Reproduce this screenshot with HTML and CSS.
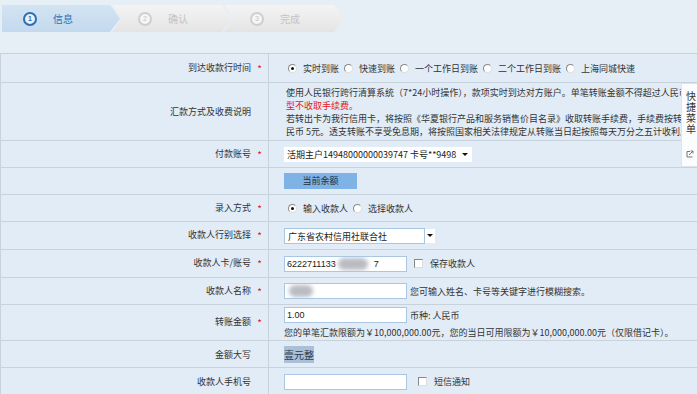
FILE: index.html
```html
<!DOCTYPE html>
<html lang="zh-CN">
<head>
  <meta charset="UTF-8">
  <title>转账汇款 - 信息</title>
  <link rel="stylesheet" href="styles.css">
</head>
<body>
  <div class="steps">
    <div class="step step-first active"><span class="num">1</span><span class="step-text">信息</span></div>
    <div class="step"><span class="num">2</span><span class="step-text">确认</span></div>
    <div class="step"><span class="num">3</span><span class="step-text">完成</span></div>
  </div>

  <table class="form">
    <tr class="h29">
      <td class="label">到达收款行时间<span class="star">*</span></td>
      <td class="value">
        <div class="options">
          <label><span class="radio on"></span>实时到账</label>
          <label><span class="radio"></span>快速到账</label>
          <label><span class="radio"></span>一个工作日到账</label>
          <label><span class="radio"></span>二个工作日到账</label>
          <label><span class="radio"></span>上海同城快速</label>
        </div>
      </td>
    </tr>
    <tr class="h58">
      <td class="label">汇款方式及收费说明<span class="star"></span></td>
      <td class="value note">
        使用人民银行跨行清算系统（7*24小时操作），款项实时到达对方账户。单笔转账金额不得超过人民币50000元，本行个人网银客户跨行转账本类<br>
        <span class="red">型不收取手续费。</span><br>
        若转出卡为我行信用卡，将按照《华夏银行产品和服务销售价目名录》收取转账手续费，手续费按转账金额的千分之五收取，最低人<br>
        民币 5元。透支转账不享受免息期，将按照国家相关法律规定从转账当日起按照每天万分之五计收利息。
      </td>
    </tr>
    <tr class="h27">
      <td class="label">付款账号<span class="star">*</span></td>
      <td class="value">
        <div class="select account">活期主户14948000000039747 卡号**9498<span class="caret"></span></div>
      </td>
    </tr>
    <tr class="h27">
      <td class="label"><span class="star"></span></td>
      <td class="value"><div class="btn">当前余额</div></td>
    </tr>
    <tr class="h27">
      <td class="label">录入方式<span class="star">*</span></td>
      <td class="value">
        <div class="options">
          <label><span class="radio on"></span>输入收款人</label>
          <label><span class="radio"></span>选择收款人</label>
        </div>
      </td>
    </tr>
    <tr class="h28">
      <td class="label">收款人行别选择<span class="star">*</span></td>
      <td class="value">
        <div class="bank">
          <div class="select bank-name">广东省农村信用社联合社</div>
          <div class="drop"><span class="caret"></span></div>
        </div>
      </td>
    </tr>
    <tr class="h28">
      <td class="label">收款人卡/账号<span class="star">*</span></td>
      <td class="value">
        <div class="line">
          <div class="input">6222711133<span class="blob wide"></span>7</div>
          <label class="check"><span class="box"></span>保存收款人</label>
        </div>
      </td>
    </tr>
    <tr class="h27">
      <td class="label">收款人名称<span class="star">*</span></td>
      <td class="value">
        <div class="line">
          <div class="input"><span class="blob"></span></div>
          <span class="hint">您可输入姓名、卡号等关键字进行模糊搜索。</span>
        </div>
      </td>
    </tr>
    <tr class="h36">
      <td class="label">转账金额<span class="star">*</span></td>
      <td class="value">
        <div class="line">
          <div class="input">1.00</div>
          <span class="hint">币种: 人民币</span>
        </div>
        <div class="limit">您的单笔汇款限额为￥10,000,000.00元，您的当日可用限额为￥10,000,000.00元（仅限借记卡）。</div>
      </td>
    </tr>
    <tr class="h27">
      <td class="label">金额大写<span class="star"></span></td>
      <td class="value"><span class="upper">壹元整</span></td>
    </tr>
    <tr class="h28">
      <td class="label">收款人手机号<span class="star"></span></td>
      <td class="value">
        <div class="line">
          <div class="input"></div>
          <label class="check sms"><span class="box"></span>短信通知</label>
        </div>
      </td>
    </tr>
  </table>

  <div class="quick">
    <span>快</span><span>捷</span><span>菜</span><span>单</span>
    <svg class="quick-icon" width="8" height="8" viewBox="0 0 8 8"><path d="M1 1.5V7H6.5M1 1.5H4M3 5L7 1M4.5 1H7V3.5" fill="none" stroke="#777" stroke-width="1"/></svg>
  </div>
</body>
</html>
```

FILE: styles.css
```css
body {
  margin: 0;
  background: #e6eef6;
  font-family: "Noto Sans CJK SC", "Liberation Sans", sans-serif;
  font-size: 9px;
  color: #333;
  overflow: hidden;
  width: 697px;
  height: 394px;
  position: relative;
}

/* steps bar */
.steps {
  display: flex;
  margin: 5px 0 0 2px;
  height: 27px;
}
.step {
  width: 120px;
  margin-left: -8px;
  display: flex;
  align-items: center;
  padding-left: 26px;
  box-sizing: border-box;
  background: linear-gradient(#f4f4f4, #e4e4e4);
  clip-path: polygon(0 0, calc(100% - 10px) 0, 100% 50%, calc(100% - 10px) 100%, 0 100%, 10px 50%);
  color: #c4c4c4;
  font-size: 10px;
}
.step-first {
  width: 118px;
  margin-left: 0;
  padding-left: 21px;
  clip-path: polygon(0 0, calc(100% - 10px) 0, 100% 50%, calc(100% - 10px) 100%, 0 100%);
}
.step.active {
  background: linear-gradient(#d3e4f3, #c3d9ed);
  color: #2c6db3;
}
.num {
  width: 10px;
  height: 10px;
  border: 2px solid #cfcfcf;
  border-radius: 50%;
  display: flex;
  align-items: center;
  justify-content: center;
  font-size: 7px;
  font-family: "Liberation Sans", sans-serif;
  margin-right: 16px;
  background: #f6f6f6;
}
.active .num {
  border-color: #2c6db3;
  background: #e6f0f9;
  color: #2c6db3;
  font-weight: bold;
}

/* form table */
.form {
  margin-top: 21px;
  width: 900px;
  border-collapse: collapse;
  background: #e2ecf6;
}
.form td {
  border: 1px solid #c7d2dd;
  padding: 0;
  vertical-align: middle;
}
.label {
  width: 268px;
  box-sizing: border-box;
  text-align: right;
  padding-right: 6px !important;
  white-space: nowrap;
}
.star {
  display: inline-block;
  width: 11px;
  color: #e02020;
  font-size: 10px;
  text-align: right;
  vertical-align: top;
}
.value {
  padding-left: 15px !important;
  white-space: nowrap;
}
.h27 { height: 27px; }
.h28 { height: 28px; }
.h29 { height: 29px; }
.h36 { height: 36px; }
.h58 { height: 58px; }

.note {
  line-height: 13px;
  padding-left: 17px !important;
}
.red { color: #e4191c; }

.options {
  display: flex;
  gap: 5px;
  padding-left: 4px;
}
.options label {
  display: flex;
  align-items: center;
}
.radio {
  width: 7px;
  height: 7px;
  border-radius: 50%;
  background: #fff;
  border: 1px solid #888;
  border-right-color: #ddd;
  border-bottom-color: #ddd;
  margin-right: 6px;
  position: relative;
}
.radio.on::after {
  content: "";
  position: absolute;
  left: 2px;
  top: 2px;
  width: 3px;
  height: 3px;
  border-radius: 50%;
  background: #111;
}

.select {
  background: #fff;
  height: 15px;
  line-height: 15px;
  box-sizing: border-box;
  padding-left: 3px;
  font-size: 9px;
  color: #222;
}
.account {
  width: 188px;
  display: flex;
  align-items: center;
  justify-content: space-between;
  padding-right: 4px;
}
.caret {
  width: 0;
  height: 0;
  border-left: 3px solid transparent;
  border-right: 3px solid transparent;
  border-top: 3px solid #111;
}
.bank {
  display: flex;
}
.bank-name {
  width: 141px;
  height: 16px;
  border: 1px solid #a9c7e2;
}
.drop {
  width: 10px;
  height: 14px;
  margin-top: 1px;
  background: #fff;
  display: flex;
  align-items: center;
  justify-content: center;
}

.btn {
  width: 73px;
  height: 16px;
  line-height: 16px;
  text-align: center;
  background: #80b3e5;
  color: #1d2d44;
}

.line {
  display: flex;
  align-items: center;
}
.input {
  width: 123px;
  height: 16px;
  line-height: 14px;
  box-sizing: border-box;
  border: 1px solid #a9c7e2;
  background: #fff;
  padding-left: 2px;
  font-family: "Liberation Sans", sans-serif;
  font-size: 9px;
  color: #222;
  display: flex;
  align-items: center;
  overflow: hidden;
}
.blob {
  display: inline-block;
  width: 24px;
  height: 12px;
  background: #b9bcc2;
  border-radius: 6px;
  filter: blur(2px);
  margin-left: 2px;
}
.blob.wide {
  width: 30px;
  margin: 0 6px 0 2px;
}
.check {
  display: flex;
  align-items: center;
  margin-left: 7px;
}
.check.sms {
  margin-left: 11px;
}
.box {
  width: 7px;
  height: 7px;
  background: #fff;
  border: 1px solid #888;
  border-right-color: #ddd;
  border-bottom-color: #ddd;
  margin-right: 7px;
}
.hint {
  margin-left: 3px;
}
.limit {
  margin-top: 4px;
  line-height: 11px;
}
.upper {
  background: #a9c0d8;
  color: #2a3a4c;
  font-size: 10px;
  padding: 1px 0;
}

/* floating quick menu */
.quick {
  position: absolute;
  left: 681px;
  top: 83px;
  width: 20px;
  height: 84px;
  background: #fbfcfd;
  border: 1px solid #dde4ea;
  box-sizing: border-box;
  display: flex;
  flex-direction: column;
  align-items: flex-start;
  padding: 6px 0 0 4px;
  font-size: 10px;
  line-height: 11px;
  color: #333;
}
.quick-icon {
  margin-top: 16px;
}
```
